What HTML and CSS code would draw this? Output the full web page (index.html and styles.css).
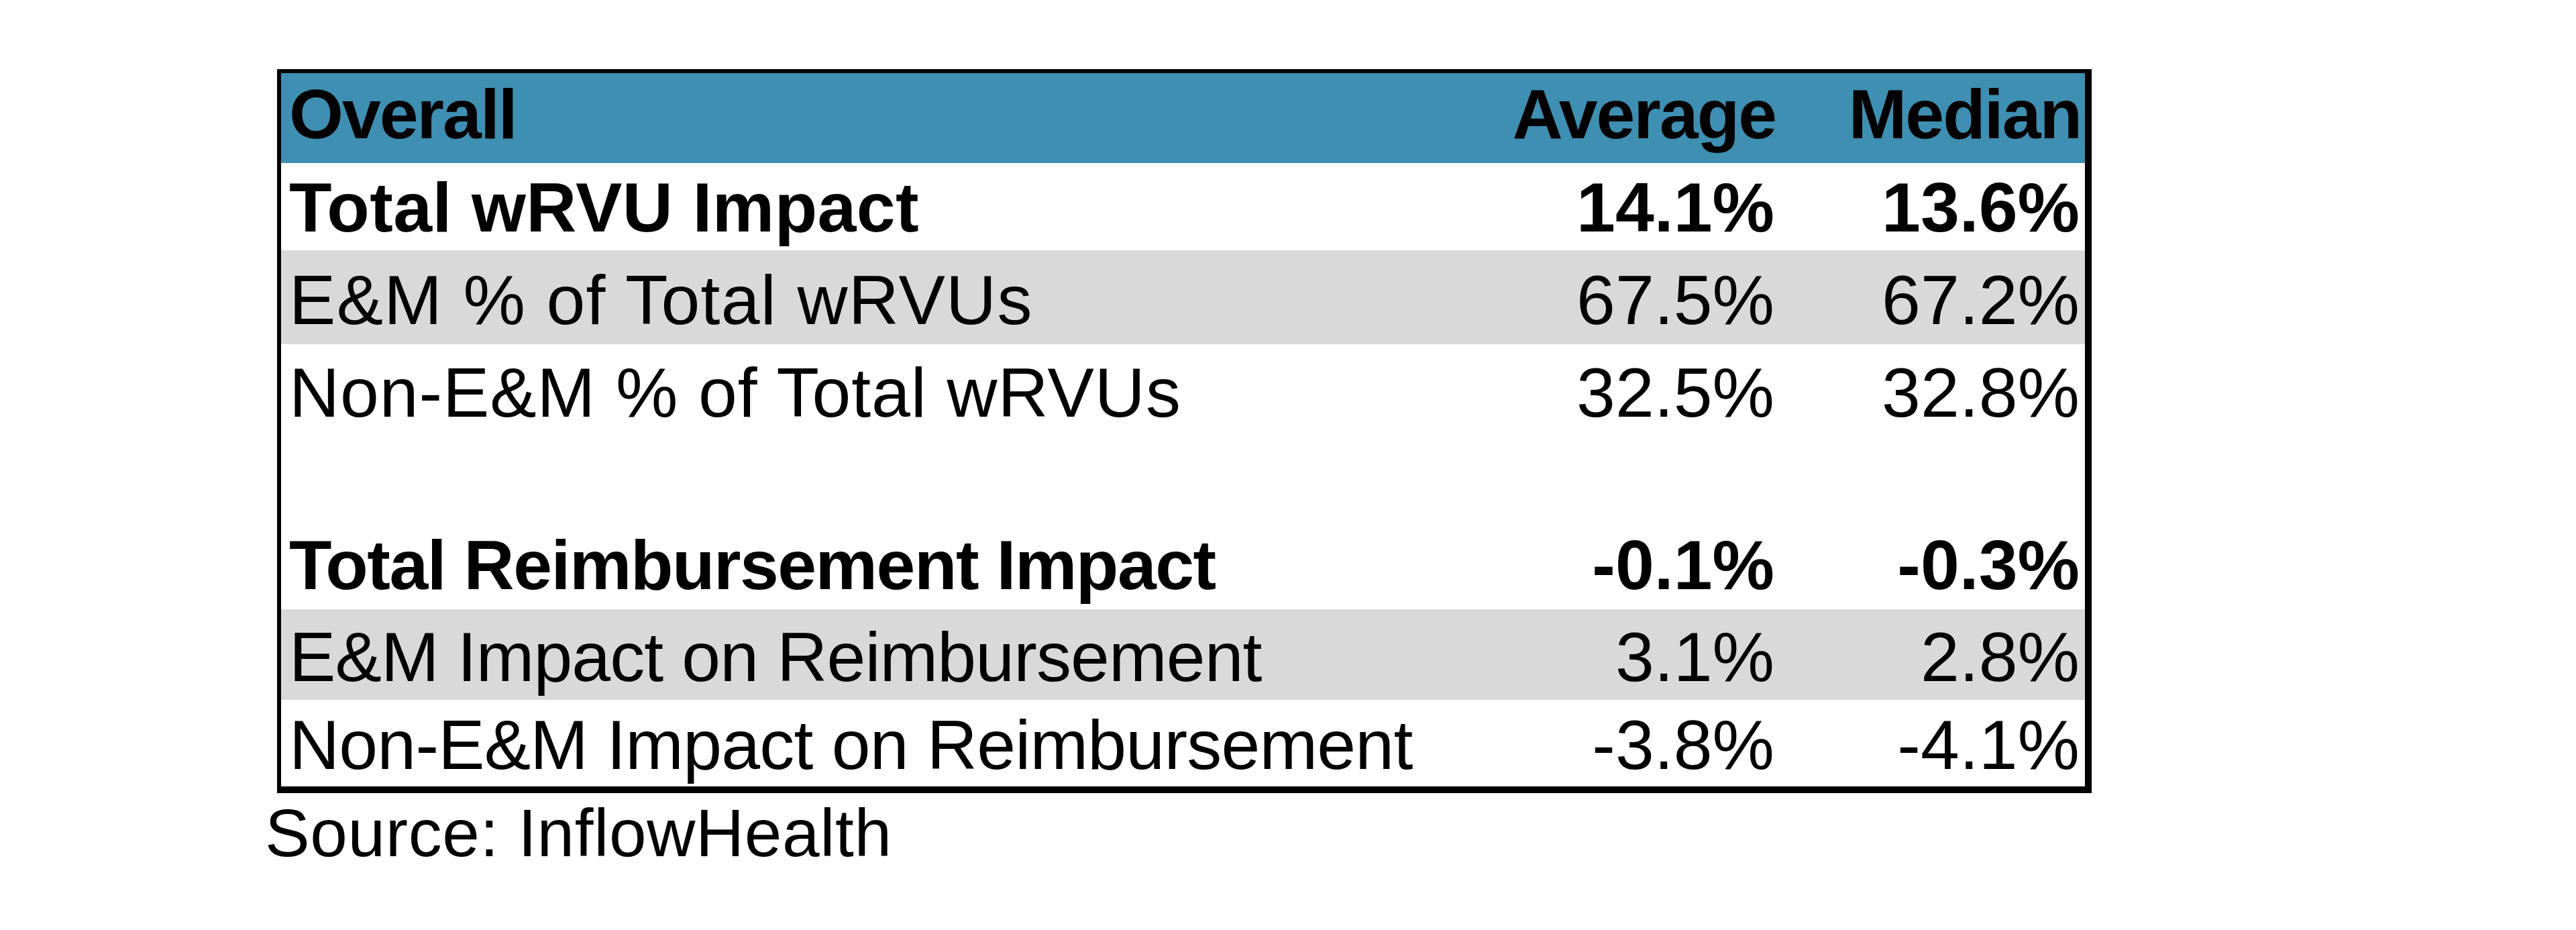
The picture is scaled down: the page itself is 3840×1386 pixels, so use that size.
FILE: index.html
```html
<!DOCTYPE html>
<html lang="en">
<head>
<meta charset="utf-8">
<title>Overall Impact</title>
<link rel="stylesheet" href="styles.css">
</head>
<body>
<div class="page">
  <div class="table">
    <div class="row head">
      <div class="cell label">Overall</div>
      <div class="cell num">Average</div>
      <div class="cell num">Median</div>
    </div>
    <div class="row bold r1">
      <div class="cell label">Total wRVU Impact</div>
      <div class="cell num">14.1%</div>
      <div class="cell num">13.6%</div>
    </div>
    <div class="row shade r2">
      <div class="cell label">E&amp;M % of Total wRVUs</div>
      <div class="cell num">67.5%</div>
      <div class="cell num">67.2%</div>
    </div>
    <div class="row r3">
      <div class="cell label">Non-E&amp;M % of Total wRVUs</div>
      <div class="cell num">32.5%</div>
      <div class="cell num">32.8%</div>
    </div>
    <div class="row r4"></div>
    <div class="row bold r5">
      <div class="cell label">Total Reimbursement Impact</div>
      <div class="cell num">-0.1%</div>
      <div class="cell num">-0.3%</div>
    </div>
    <div class="row shade r6">
      <div class="cell label">E&amp;M Impact on Reimbursement</div>
      <div class="cell num">3.1%</div>
      <div class="cell num">2.8%</div>
    </div>
    <div class="row r7">
      <div class="cell label">Non-E&amp;M Impact on Reimbursement</div>
      <div class="cell num">-3.8%</div>
      <div class="cell num">-4.1%</div>
    </div>
  </div>
  <div class="source">Source: InflowHealth</div>
</div>
</body>
</html>
```
FILE: styles.css
```css
html, body {
  margin: 0;
  padding: 0;
  background: #ffffff;
}

body {
  font-family: "Liberation Sans", Arial, sans-serif;
  color: #000000;
}

.page {
  padding: 103px 0 0 395px;
}

.table {
  width: 2689px;
  margin-left: 18px;
  border-style: solid;
  border-color: #000000;
  border-width: 6px 10px 10px 6px;
  background: #ffffff;
}

.row {
  display: grid;
  grid-template-columns: 1fr 455px 455px;
  align-items: end;
  font-size: 104px;
  line-height: 120px;
  padding-bottom: 4px;
  box-sizing: border-box;
}

.cell {
  white-space: nowrap;
}

.label {
  padding-left: 12px;
}

.num {
  text-align: right;
  padding-right: 8px;
}

.head {
  height: 134px;
  background: #3e8fb2;
  font-weight: bold;
  letter-spacing: -2px;
  padding-bottom: 13px;
}

.head .num {
  padding-right: 6px;
}

.bold {
  font-weight: bold;
}

.shade {
  background: #d9d9d9;
}

.r1 { height: 130px; padding-bottom: 4px; }
.r2 { height: 140px; padding-bottom: 6px; }
.r3 { height: 133px; padding-bottom: 1px; }
.r4 { height: 129px; }
.r5 { height: 133px; padding-bottom: 6px; }
.r6 { height: 135px; padding-bottom: 4px; }
.r7 { height: 129px; padding-bottom: 2px; }

.r1 .label { letter-spacing: 0.4px; }
.r2 .label { letter-spacing: 1.3px; }
.r3 .label { letter-spacing: 0.9px; }
.r5 .label { letter-spacing: -1.5px; }
.r6 .label { letter-spacing: -0.9px; }
.r7 .label { letter-spacing: -0.8px; }

.source {
  font-size: 100px;
  line-height: 115px;
  margin-top: 2px;
  letter-spacing: 0.6px;
}
```
